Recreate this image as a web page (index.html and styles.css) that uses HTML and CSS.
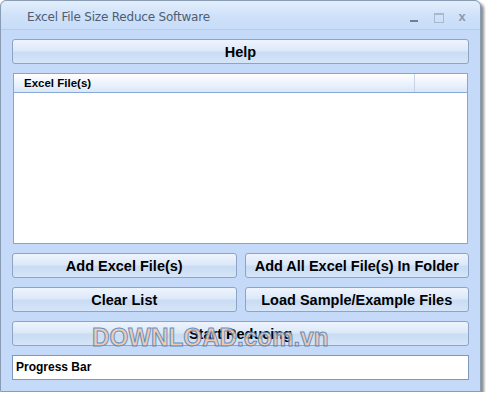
FILE: index.html
```html
<!DOCTYPE html>
<html lang="en">
<head>
    <meta charset="UTF-8">
    <title>Excel File Size Reduce Software</title>
    <link rel="stylesheet" href="styles.css">
</head>
<body>
    <div class="window">
        <div class="titlebar">
            <span class="title">Excel File Size Reduce Software</span>
            <div class="controls">
                <span class="ctl min"></span>
                <span class="ctl max"></span>
                <span class="ctl close">x</span>
            </div>
        </div>
        <div class="content">
            <button class="button">Help</button>
            <div class="list">
                <div class="list-head">
                    <span class="col-name">Excel File(s)</span>
                    <span class="col-rest"></span>
                </div>
                <div class="list-body"></div>
            </div>
            <div class="row">
                <button class="button">Add Excel File(s)</button>
                <button class="button">Add All Excel File(s) In Folder</button>
            </div>
            <div class="row">
                <button class="button">Clear List</button>
                <button class="button">Load Sample/Example Files</button>
            </div>
            <button class="button start">Start Reducing</button>
            <div class="progress">Progress Bar</div>
        </div>
        <div class="watermark">DOWNLOAD.com.vn</div>
    </div>
</body>
</html>
```

FILE: styles.css
```css
* {
    box-sizing: border-box;
}
body {
    margin: 0;
    background: #ffffff;
    font-family: "DejaVu Sans", Tahoma, sans-serif;
}
.window {
    position: relative;
    width: 481px;
    height: 392px;
    background-color: #c4daf8;
    border: 1px solid #8a9cb4;
    border-radius: 6px 6px 0 0;
    box-shadow: 3px 3px 3px rgba(0, 0, 0, 0.45);
    display: flex;
    flex-direction: column;
}
.titlebar {
    height: 29px;
    padding-top: 4px;
    display: flex;
    align-items: center;
    justify-content: space-between;
    background: linear-gradient(#e3eefc, #d0e2fa 50%, #c6dcf8);
    border-bottom: 1px solid #b6cde9;
    border-radius: 6px 6px 0 0;
}
.title {
    margin-left: 26px;
    font-size: 12px;
    color: #4e5d72;
    font-family: "DejaVu Sans", sans-serif;
    letter-spacing: -0.2px;
}
.controls {
    display: flex;
    gap: 12px;
    margin-right: 12px;
    align-items: center;
}
.ctl {
    width: 12px;
    height: 12px;
    position: relative;
}
.min::after {
    content: "";
    position: absolute;
    left: 2px;
    bottom: 1px;
    width: 8px;
    height: 2px;
    background: #6f7e92;
}
.max::after {
    content: "";
    position: absolute;
    left: 2px;
    top: 2px;
    width: 8px;
    height: 7px;
    border: 1px solid #a9b8cb;
    border-top-width: 2px;
}
.close {
    font-size: 13px;
    font-weight: bold;
    color: #8b9bb0;
    line-height: 12px;
    text-align: center;
    font-family: "Liberation Sans", sans-serif;
}
.content {
    flex: 1;
    padding: 9px 11px 0 11px;
    display: flex;
    flex-direction: column;
    gap: 9px;
}
.content > * {
    flex-shrink: 0;
}
.button {
    height: 25px;
    width: 100%;
    border: 1px solid #8ea4c4;
    border-radius: 3px;
    background: linear-gradient(#eef4fd, #dde9f9 45%, #c9dcf4 55%, #d6e5f8);
    font-family: "Liberation Sans", Arial, sans-serif;
    font-weight: bold;
    font-size: 14.5px;
    color: #000000;
    padding: 0;
}
.list {
    height: 171px;
    border: 1px solid #8ea4c4;
    background: #ffffff;
    margin: 0 1px;
    display: flex;
    flex-direction: column;
}
.list-head {
    height: 19px;
    display: flex;
    background: linear-gradient(#ffffff, #e9f1fc 60%, #dae7f8);
    border-bottom: 1px solid #8aa8d4;
}
.col-name {
    flex: 1;
    padding-left: 10px;
    font-family: "Liberation Sans", Arial, sans-serif;
    font-weight: bold;
    font-size: 11.5px;
    line-height: 18px;
    border-right: 1px solid #c6d3e4;
}
.col-rest {
    width: 52px;
}
.list-body {
    flex: 1;
}
.row {
    display: flex;
    gap: 8px;
}
.row .button {
    flex: 1 1 0;
    width: auto;
}
.progress {
    height: 25px;
    background: #ffffff;
    border: 1px solid #7f98bd;
    padding-left: 3px;
    font-family: "Liberation Sans", Arial, sans-serif;
    font-weight: bold;
    font-size: 12px;
    line-height: 23px;
}
.watermark {
    position: absolute;
    left: 91px;
    top: 321px;
    font-family: "Liberation Sans", Arial, sans-serif;
    font-weight: bold;
    font-size: 26px;
    color: #f4c7a4;
    -webkit-text-stroke: 1px #4d7fb8;
    opacity: 0.85;
    transform: scaleX(0.93);
    transform-origin: left top;
    pointer-events: none;
}
```
